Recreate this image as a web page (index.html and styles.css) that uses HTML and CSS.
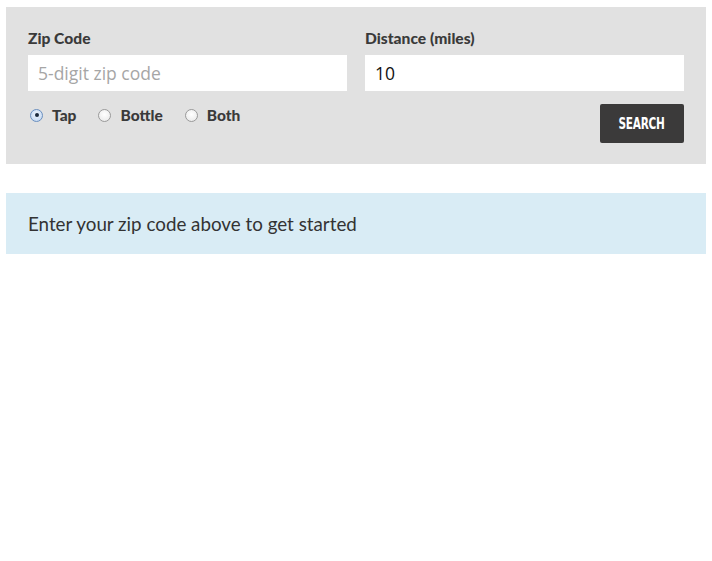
FILE: index.html
```html
<!DOCTYPE html>
<html>
<head>
<meta charset="utf-8">
<link rel="stylesheet" href="styles.css">
</head>
<body>
<form class="search-panel">
  <div class="field">
    <label class="field-label" for="zip">Zip Code</label>
    <input class="text-input" id="zip" type="text" placeholder="5-digit zip code">
  </div>
  <div class="field">
    <label class="field-label" for="dist">Distance (miles)</label>
    <input class="text-input" id="dist" type="text" value="10">
  </div>
  <div class="radios">
    <label class="radio"><span class="radio-dot checked"></span>Tap</label>
    <label class="radio"><span class="radio-dot"></span>Bottle</label>
    <label class="radio"><span class="radio-dot"></span>Both</label>
  </div>
  <div class="actions">
    <button class="search-btn" type="button"><span class="btn-text">SEARCH</span></button>
  </div>
</form>
<div class="info">Enter your zip code above to get started</div>
</body>
</html>
```
FILE: styles.css
```css
html, body {
  background: #fff;
}
body {
  margin: 7px 6px;
  font-family: Lato, "Open Sans", sans-serif;
  color: #333;
}
.search-panel {
  background: #e1e1e1;
  padding: 23px 22px 21px;
  display: grid;
  grid-template-columns: 1fr 1fr;
  column-gap: 18px;
  row-gap: 13px;
}
.field {
  display: flex;
  flex-direction: column;
}
.field-label {
  font-weight: 900;
  font-size: 15.6px;
  line-height: 17px;
  color: #3a3a3a;
  margin-bottom: 8px;
}
.text-input {
  box-sizing: border-box;
  height: 36px;
  border: none;
  background: #fff;
  padding: 0 10px;
  font-family: "Open Sans", sans-serif;
  font-size: 17.5px;
  color: #111;
  outline: none;
}
.text-input::placeholder {
  color: #a6a6a6;
}
.radios {
  display: flex;
  align-items: center;
  height: 22px;
  gap: 22px;
  padding-left: 2px;
}
.radio {
  display: flex;
  align-items: center;
  gap: 9px;
  font-weight: 900;
  font-size: 15.5px;
  color: #3a3a3a;
}
.radio-dot {
  box-sizing: border-box;
  width: 13px;
  height: 13px;
  border-radius: 50%;
  border: 1px solid #9a9a9a;
  background: radial-gradient(circle at 50% 40%, #fff 0%, #e6e6e6 100%);
  position: relative;
}
.radio-dot.checked {
  border-color: #6a8fbf;
  background: radial-gradient(circle at 50% 40%, #eef4fc 0%, #bcd3ef 100%);
}
.radio-dot.checked::after {
  content: "";
  position: absolute;
  left: 50%;
  top: 50%;
  width: 4px;
  height: 4px;
  margin: -2px 0 0 -2px;
  border-radius: 50%;
  background: #1b2a3c;
}
.actions {
  display: flex;
  justify-content: flex-end;
}
.search-btn {
  width: 84px;
  height: 39px;
  border: none;
  border-radius: 2px;
  background: #3b3a3a;
  color: #fff;
  padding: 0;
  display: flex;
  align-items: center;
  justify-content: center;
}
.btn-text {
  display: inline-block;
  font-family: "DejaVu Sans Condensed", "DejaVu Sans", sans-serif;
  font-stretch: condensed;
  font-weight: bold;
  font-size: 15px;
  letter-spacing: -0.3px;
  transform: scaleX(0.78);
}
.info {
  margin-top: 29px;
  background: #d9ecf5;
  height: 61px;
  display: flex;
  align-items: center;
  padding-left: 22px;
  font-size: 18.8px;
  color: #333;
}
```
